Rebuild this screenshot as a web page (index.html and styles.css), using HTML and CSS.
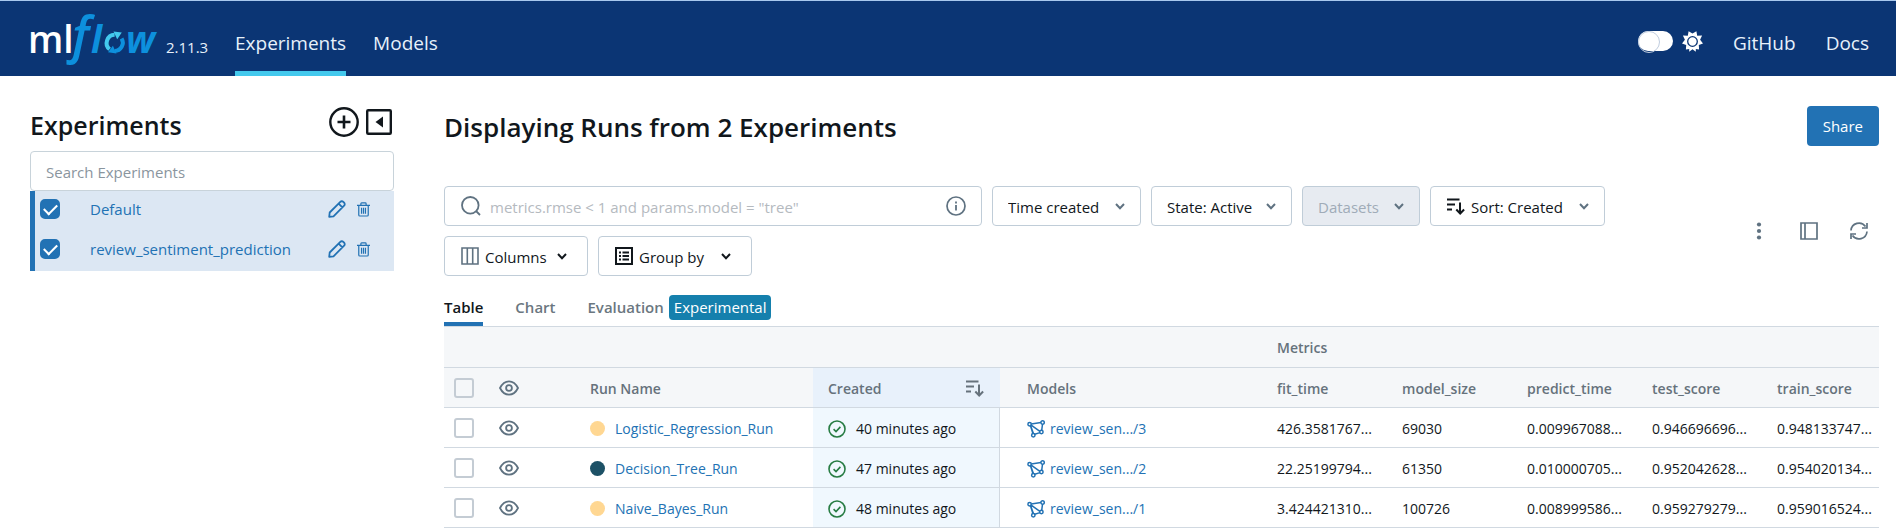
FILE: index.html
```html
<!DOCTYPE html>
<html lang="en">
<head>
<meta charset="utf-8">
<title>MLflow - Experiments</title>
<link rel="stylesheet" href="styles.css">
</head>
<body>
<svg class="sprite" aria-hidden="true">
  <symbol id="eye" viewBox="0 0 20 16"><path d="M1 8C3.200 3.600 6.300 1.300 10 1.300S16.800 3.600 19 8c-2.200 4.400-5.300 6.700-9 6.700S3.200 12.400 1 8Z" fill="none" stroke="currentColor" stroke-width="1.800"/><circle cx="10" cy="8" r="2.900" fill="none" stroke="currentColor" stroke-width="1.800"/></symbol>
  <symbol id="chevron" viewBox="0 0 10 7"><path d="m1 1 4 4.200L9 1" fill="none" stroke="currentColor" stroke-width="2"/></symbol>
  <symbol id="sort" viewBox="0 0 18 17"><path d="M0 1.500h12.500M0 6.500h8M0 11.500h5M13 4.500v11M9.300 11.500l3.900 4 3.900-4" fill="none" stroke="currentColor" stroke-width="2"/></symbol>
  <symbol id="done" viewBox="0 0 18 18"><circle cx="9" cy="9" r="8" fill="none" stroke="currentColor" stroke-width="1.600"/><path d="m5.600 9.200 2.400 2.300 4.400-4.600" fill="none" stroke="currentColor" stroke-width="1.600"/></symbol>
  <symbol id="model" viewBox="0 0 18 18"><g fill="none" stroke="currentColor" stroke-width="1.500"><path d="M4.200 4 14 2.600M3.400 5.600l2.600 8.200M4.200 5.200l8.700 6.200M15.500 4.200l-.800 6.300M7.700 14.300l5.300-1.700M3.300 4.800l3.200 9"/><circle cx="2.600" cy="4.300" r="1.700"/><circle cx="15.600" cy="2.500" r="1.700"/><circle cx="14.400" cy="12" r="1.700"/><circle cx="6.300" cy="15.300" r="1.700"/></g></symbol>
  <symbol id="pencil" viewBox="0 0 18 18"><path d="m1.200 16.800.5-4.300L12.300 1.900a2.100 2.100 0 0 1 3 0l.8.800a2.100 2.100 0 0 1 0 3L5.500 16.300l-4.300.5ZM10.600 3.600l3.800 3.800" fill="none" stroke="currentColor" stroke-width="1.800" stroke-linejoin="round"/></symbol>
  <symbol id="trash" viewBox="0 0 14 16"><path d="M0 3.600h14M4.200 3.200V1.700q0-.8.800-.8h4q.8 0 .8.800v1.500M1.900 3.600v10.200q0 1.200 1.200 1.200h7.800q1.200 0 1.200-1.200V3.600M4.900 6.200v6.300M7 6.200v6.300M9.100 6.200v6.300" fill="none" stroke="currentColor" stroke-width="1.300"/></symbol>
</svg>

<header class="topbar">
  <a class="brand" href="#">
    <svg class="logo" viewBox="0 0 132 56" role="img" aria-label="mlflow">
      <text class="logo-ml" x="-2" y="41">ml</text>
      <text class="logo-f" x="42" y="41">f</text>
      <text class="logo-flow" x="61" y="41">l</text>
      <path d="M79.600 37.300a8.200 8.200 0 0 1 5-14.500" class="ring-light"/>
      <path d="m83.500 19.400 8.300 1-4.600 6.800z" class="tip-light"/>
      <path d="M91.600 26.500a8.200 8.200 0 0 1-7 12.400" class="ring-dark"/>
      <path d="m86.500 41.500-8.500-1.200 4.900-6.600z" class="tip-dark"/>
      <text class="logo-flow" x="96" y="41">w</text>
    </svg>
    <span class="version">2.11.3</span>
  </a>
  <nav class="nav">
    <a class="nav-link is-active" href="#">Experiments</a>
    <a class="nav-link" href="#">Models</a>
  </nav>
  <div class="topbar-end">
    <div class="theme">
      <input class="toggle" type="checkbox" role="switch" aria-label="Dark theme">
      <svg width="21" height="21" viewBox="-10.500 -10.500 21 21" aria-hidden="true"><path fill="#fff" d="M0-8 3.900-10.300 4.700-5.700 9.600-5.900 7.600-1.700 10.500 2 6.300 3.600 6.600 8 3.300 7.600 3.300 10.300 0 7.800-3.300 10.300-3.300 7.600-6.600 8-6.300 3.600-10.500 2-7.600-1.700-9.600-5.900-4.700-5.700-3.900-10.300z"/><circle r="4.800" fill="#fff" stroke="#0b3574" stroke-width="1.300"/></svg>
    </div>
    <a class="nav-link" href="#">GitHub</a>
    <a class="nav-link" href="#">Docs</a>
  </div>
</header>

<div class="page">
  <aside class="sidebar">
    <div class="sidebar-head">
      <h2>Experiments</h2>
      <div class="head-icons">
        <button class="icon-btn" aria-label="New experiment"><svg width="30" height="30" viewBox="0 0 30 30"><circle cx="15" cy="15" r="13.700" fill="none" stroke="currentColor" stroke-width="2.400"/><path d="M15 8.500v13M8.500 15h13" stroke="currentColor" stroke-width="2.600"/></svg></button>
        <button class="icon-btn" aria-label="Collapse sidebar"><svg width="26" height="26" viewBox="0 0 26 26"><rect x="1.200" y="1.200" width="23.600" height="23.600" rx="1" fill="none" stroke="currentColor" stroke-width="2.400"/><path d="M17 7.500v11L9.500 13z" fill="currentColor"/></svg></button>
      </div>
    </div>
    <input class="exp-search" type="text" placeholder="Search Experiments" aria-label="Search Experiments">
    <ul class="exp-list">
      <li class="exp">
        <input class="check" type="checkbox" id="exp-0" checked>
        <label for="exp-0">Default</label>
        <button class="icon-btn" aria-label="Rename"><svg width="18" height="18"><use href="#pencil"/></svg></button>
        <button class="icon-btn" aria-label="Delete"><svg width="13" height="15"><use href="#trash"/></svg></button>
      </li>
      <li class="exp">
        <input class="check" type="checkbox" id="exp-1" checked>
        <label for="exp-1">review_sentiment_prediction</label>
        <button class="icon-btn" aria-label="Rename"><svg width="18" height="18"><use href="#pencil"/></svg></button>
        <button class="icon-btn" aria-label="Delete"><svg width="13" height="15"><use href="#trash"/></svg></button>
      </li>
    </ul>
  </aside>

  <main class="main">
    <div class="title-row">
      <h1>Displaying Runs from 2 Experiments</h1>
      <button class="share">Share</button>
    </div>

    <div class="toolbar">
      <div class="filters">
        <div class="search">
          <svg width="20" height="20" viewBox="0 0 20 20" aria-hidden="true"><circle cx="9.300" cy="9.300" r="8.300" fill="none" stroke="currentColor" stroke-width="1.800"/><path d="m15 15 4 4" stroke="currentColor" stroke-width="1.800"/></svg>
          <input type="text" placeholder="metrics.rmse &lt; 1 and params.model = &quot;tree&quot;" aria-label="Search runs">
          <button class="icon-btn" aria-label="Search syntax help"><svg width="20" height="20" viewBox="0 0 20 20"><circle cx="10" cy="10" r="9" fill="none" stroke="currentColor" stroke-width="1.700"/><path d="M10 9v5.500M10 5.500v2" stroke="currentColor" stroke-width="1.800"/></svg></button>
        </div>
        <div class="picker time">
          <select aria-label="Time created"><option>Time created</option></select>
          <svg class="chev" width="10" height="7"><use href="#chevron"/></svg>
        </div>
        <div class="picker state">
          <select aria-label="State"><option>State: Active</option></select>
          <svg class="chev" width="10" height="7"><use href="#chevron"/></svg>
        </div>
        <div class="picker datasets">
          <select aria-label="Datasets" disabled><option>Datasets</option></select>
          <svg class="chev" width="10" height="7"><use href="#chevron"/></svg>
        </div>
        <div class="picker sort">
          <svg width="18" height="17"><use href="#sort"/></svg>
          <select aria-label="Sort"><option>Sort: Created</option></select>
          <svg class="chev" width="10" height="7"><use href="#chevron"/></svg>
        </div>
        <button class="picker columns">
          <svg class="muted" width="18" height="18" viewBox="0 0 18 18"><path d="M1 1h16v16H1zM6.300 1v16M11.700 1v16" fill="none" stroke="currentColor" stroke-width="1.600"/></svg>
          <span>Columns</span>
          <svg class="chev dark" width="10" height="7"><use href="#chevron"/></svg>
        </button>
        <button class="picker group">
          <svg width="18" height="18" viewBox="0 0 18 18"><path d="M1 1h16v16H1z" fill="none" stroke="currentColor" stroke-width="2"/><path d="M4 5.500h2M7.500 5.500H14M4 9h2M7.500 9H14M4 12.500h2M7.500 12.500H14" stroke="currentColor" stroke-width="1.800"/></svg>
          <span>Group by</span>
          <svg class="chev dark" width="10" height="7"><use href="#chevron"/></svg>
        </button>
      </div>
      <div class="actions">
        <button class="icon-btn" aria-label="More"><svg width="18" height="18" viewBox="0 0 18 18" fill="currentColor"><circle cx="9" cy="2.500" r="2.100"/><circle cx="9" cy="9" r="2.100"/><circle cx="9" cy="15.500" r="2.100"/></svg></button>
        <button class="icon-btn" aria-label="Toggle side pane"><svg width="18" height="18" viewBox="0 0 18 18"><path d="M1 1h16v16H1zM5 1v16" fill="none" stroke="currentColor" stroke-width="1.700"/></svg></button>
        <button class="icon-btn" aria-label="Refresh"><svg width="18" height="18" viewBox="0 0 18 18"><path d="M1 8.500a8 8 0 0 1 14.500-4M17 9.500a8 8 0 0 1-14.500 4M17 1v5h-5M1 17v-5h5" fill="none" stroke="currentColor" stroke-width="1.700"/></svg></button>
      </div>
    </div>

    <div class="tabs" role="tablist">
      <button class="tab is-active" role="tab" aria-selected="true">Table</button>
      <button class="tab" role="tab">Chart</button>
      <button class="tab" role="tab">Evaluation <span class="badge">Experimental</span></button>
    </div>

    <table class="runs">
      <colgroup><col class="c-check"><col class="c-eye"><col class="c-name"><col class="c-created"><col class="c-models"><col class="c-metric"><col class="c-metric"><col class="c-metric"><col class="c-metric"><col></colgroup>
      <thead>
        <tr><td colspan="5"></td><th colspan="5" scope="colgroup">Metrics</th></tr>
        <tr>
          <th class="tight"><input class="check" type="checkbox" aria-label="Select all runs"></th>
          <th class="tight"><svg class="eye" width="20" height="16"><use href="#eye"/></svg></th>
          <th>Run Name</th>
          <th class="created"><div class="cell spread">Created <svg width="18" height="17"><use href="#sort"/></svg></div></th>
          <th class="models">Models</th>
          <th>fit_time</th><th>model_size</th><th>predict_time</th><th>test_score</th><th>train_score</th>
        </tr>
      </thead>
      <tbody>
        <tr>
          <td class="tight"><input class="check" type="checkbox" aria-label="Select Logistic_Regression_Run"></td>
          <td class="tight"><svg class="eye" width="20" height="16"><use href="#eye"/></svg></td>
          <td><div class="cell"><span class="dot yellow"></span><a href="#">Logistic_Regression_Run</a></div></td>
          <td class="created"><div class="cell"><svg class="done" width="18" height="18"><use href="#done"/></svg>40 minutes ago</div></td>
          <td class="models"><a class="cell model" href="#"><svg width="18" height="18"><use href="#model"/></svg>review_sen.../3</a></td>
          <td>426.3581767...</td><td>69030</td><td>0.009967088...</td><td>0.946696696...</td><td>0.948133747...</td>
        </tr>
        <tr>
          <td class="tight"><input class="check" type="checkbox" aria-label="Select Decision_Tree_Run"></td>
          <td class="tight"><svg class="eye" width="20" height="16"><use href="#eye"/></svg></td>
          <td><div class="cell"><span class="dot teal"></span><a href="#">Decision_Tree_Run</a></div></td>
          <td class="created"><div class="cell"><svg class="done" width="18" height="18"><use href="#done"/></svg>47 minutes ago</div></td>
          <td class="models"><a class="cell model" href="#"><svg width="18" height="18"><use href="#model"/></svg>review_sen.../2</a></td>
          <td>22.25199794...</td><td>61350</td><td>0.010000705...</td><td>0.952042628...</td><td>0.954020134...</td>
        </tr>
        <tr>
          <td class="tight"><input class="check" type="checkbox" aria-label="Select Naive_Bayes_Run"></td>
          <td class="tight"><svg class="eye" width="20" height="16"><use href="#eye"/></svg></td>
          <td><div class="cell"><span class="dot yellow"></span><a href="#">Naive_Bayes_Run</a></div></td>
          <td class="created"><div class="cell"><svg class="done" width="18" height="18"><use href="#done"/></svg>48 minutes ago</div></td>
          <td class="models"><a class="cell model" href="#"><svg width="18" height="18"><use href="#model"/></svg>review_sen.../1</a></td>
          <td>3.424421310...</td><td>100726</td><td>0.008999586...</td><td>0.959279279...</td><td>0.959016524...</td>
        </tr>
      </tbody>
    </table>
  </main>
</div>
</body>
</html>
```

FILE: styles.css
```css
* { box-sizing: border-box; }

body {
  margin: 0;
  background: #fff;
  color: #11171c;
  font: 15px/20px "Open Sans", "Noto Sans", sans-serif;
}

button, input, select { font: inherit; color: inherit; }
a { color: #2272b4; text-decoration: none; }
svg { display: block; flex: none; }
h1, h2 { margin: 0; font-weight: 600; }
.sprite { position: absolute; width: 0; height: 0; }

.icon-btn {
  display: flex;
  padding: 0;
  border: 0;
  background: none;
  cursor: pointer;
}

/* Top bar */
.topbar {
  display: flex;
  height: 76px;
  padding: 0 27px 0 30px;
  border-top: 1px solid #a8c8ee;
  background: #0b3574;
}

.brand {
  display: flex;
  gap: 4px;
  width: 205px;
  color: #e7f1fb;
}

.logo { width: 132px; height: 56px; margin-top: 11px; overflow: visible; }
.logo-ml { font: 600 37px "Open Sans", sans-serif; fill: #fff; }
.logo-flow { font: italic 700 37px "Open Sans", sans-serif; fill: #0d90dd; }
.logo-f { font: italic 600 50px "Open Sans", sans-serif; fill: #0d90dd; }
.ring-light, .ring-dark { fill: none; stroke-width: 4; }
.ring-light { stroke: #43c9ed; }
.ring-dark { stroke: #0d90dd; }
.tip-light { fill: #43c9ed; }
.tip-dark { fill: #0d90dd; }
.version { margin-top: 36px; }

.nav { display: flex; gap: 27px; }
.nav-link {
  padding-top: 27px;
  border-bottom: 5px solid transparent;
  color: #e7f1fb;
  font-size: 19px;
  line-height: 30px;
}
.nav-link.is-active { border-color: #43c9ed; }

.topbar-end { display: flex; gap: 30px; margin-left: auto; }
.theme { display: flex; align-items: center; align-self: flex-start; gap: 9px; height: 80px; }
.toggle {
  display: flex;
  width: 35px;
  height: 20px;
  margin: 0;
  border-radius: 10px;
  background: #fff;
  appearance: none;
}
.toggle::before {
  content: "";
  width: 20px;
  height: 20px;
  border: 1px solid #c0cddf;
  border-radius: 50%;
}
.toggle:checked { justify-content: flex-end; }

/* Page frame */
.page { display: flex; gap: 50px; padding: 30px 17px 0 30px; }
.sidebar { flex: 0 0 364px; }
.main { flex: 1; min-width: 0; }

/* Experiment list */
.sidebar-head { display: flex; justify-content: space-between; padding-right: 2px; height: 45px; }
.sidebar-head h2 { font-size: 25px; line-height: 38px; }
.head-icons { display: flex; align-items: center; gap: 7px; height: 32px; }

.exp-search {
  display: block;
  width: 100%;
  height: 40px;
  padding: 2px 15px 0;
  border: 1px solid #c8d3da;
  border-radius: 4px;
}
.exp-search::placeholder { color: #8a959e; opacity: 1; }

.exp-list { margin: 0; padding: 0; list-style: none; }
.exp {
  display: flex;
  align-items: center;
  height: 40px;
  padding: 0 24px 4px 5px;
  border-left: 5px solid #2272b4;
  background: #dce7f3;
  color: #2272b4;
}
.exp label { flex: 1; padding-left: 30px; }
.exp .icon-btn + .icon-btn { margin-left: 11px; }

.check {
  display: grid;
  place-items: center;
  width: 20px;
  height: 20px;
  margin: 0;
  border: 2px solid #c4ccd4;
  border-radius: 3px;
  background: #fff;
  appearance: none;
}
.runs thead .check { background: none; }
.check:checked { border-color: #2272b4; border-radius: 5px; background: #2272b4; }
.check:checked::before {
  content: "";
  width: 11px;
  height: 6px;
  margin-bottom: 3px;
  border: solid #fff;
  border-width: 0 0 2px 2px;
  transform: rotate(-45deg);
}

/* Title */
.title-row { display: flex; align-items: flex-start; justify-content: space-between; }
.title-row h1 { font-size: 26px; line-height: 43px; }
.share {
  height: 40px;
  padding: 0 16px;
  border: 0;
  border-radius: 4px;
  background: #2272b4;
  color: #fff;
}

/* Filters */
.toolbar {
  display: flex;
  align-items: center;
  justify-content: space-between;
  margin-top: 37px;
  color: #11171c;
}
.filters { display: flex; flex: 1; flex-wrap: wrap; gap: 10px; max-width: 1180px; }
.search, .picker {
  display: flex;
  align-items: center;
  height: 40px;
  padding: 0 15px;
  border: 1px solid #c0cdd8;
  border-radius: 4px;
  background: #fff;
}
.search { flex: 0 1 538px; color: #5f7281; }
.search input {
  flex: 1;
  min-width: 0;
  height: 36px;
  padding: 2px 9px 0;
  border: 0;
  background: none;
  color: #11171c;
}
.search input::placeholder { color: #b5babf; opacity: 1; }
.search > svg { margin-left: 1px; }

.picker select {
  padding: 2px 0 0;
  border: 0;
  background: none;
  appearance: none;
}
.picker > svg:first-child { margin: 0 6px 0 1px; }
.picker span { padding-top: 2px; }
.picker .chev { margin-left: auto; color: #5f7281; }
.picker .chev.dark { color: #11171c; }
.picker .muted { color: #5f7281; }
.time { width: 149px; }
.state { width: 141px; }
.datasets { width: 118px; background: #e7ebf1; }
.datasets select { color: #a0abb8; opacity: 1; }
.sort { width: 175px; }
.columns { width: 144px; padding-right: 20px; }
.group { width: 154px; padding-right: 20px; }

.actions { display: flex; gap: 32px; padding-right: 11px; color: #5f7281; }

/* Tabs */
.tabs { display: flex; gap: 32px; margin-top: 16px; }
.tab {
  display: flex;
  align-items: center;
  gap: 5px;
  height: 34px;
  padding: 0;
  border: 0;
  border-bottom: 4px solid transparent;
  background: none;
  color: #6b7780;
  font-weight: 600;
}
.tab.is-active { border-color: #2272b4; color: #11171c; }
.badge {
  padding: 2px 5px 3px;
  border-radius: 4px;
  background: #1580ad;
  color: #fff;
  font-weight: 400;
}

/* Runs table */
.runs {
  width: 100%;
  border-collapse: separate;
  border-spacing: 0;
  border-top: 1px solid #d1d9e1;
  table-layout: fixed;
  font-size: 14px;
}
.c-check { width: 45px; }
.c-eye { width: 85px; }
.c-name { width: 239px; }
.c-created { width: 187px; }
.c-models { width: 261px; }
.c-metric { width: 125px; }
.runs th, .runs td {
  height: 40px;
  padding: 2px 0 0 16px;
  border-bottom: 1px solid #d1d9e1;
  overflow: hidden;
  text-align: left;
  white-space: nowrap;
}
.runs thead tr:first-child > * { height: 41px; }
.runs thead th, .runs thead td { background: #f5f7f9; color: #66727c; font-weight: 600; }
.runs .tight { padding: 0 0 0 10px; }
.runs .created { padding-left: 15px; }
.runs .models { padding-left: 27px; }
.runs thead .created { background: #e8f1fb; }
.runs tbody .created { border-right: 1px solid #d1d9e1; background: #f0f8fe; }
.cell { display: flex; align-items: center; gap: 10px; }
.spread { justify-content: space-between; padding-right: 16px; }
.model { gap: 5px; }
.eye { color: #5f7281; }
.done { color: #277c43; }
.dot { width: 15px; height: 15px; border-radius: 50%; }
.yellow { background: #ffd792; }
.teal { background: #1d5166; }
```
